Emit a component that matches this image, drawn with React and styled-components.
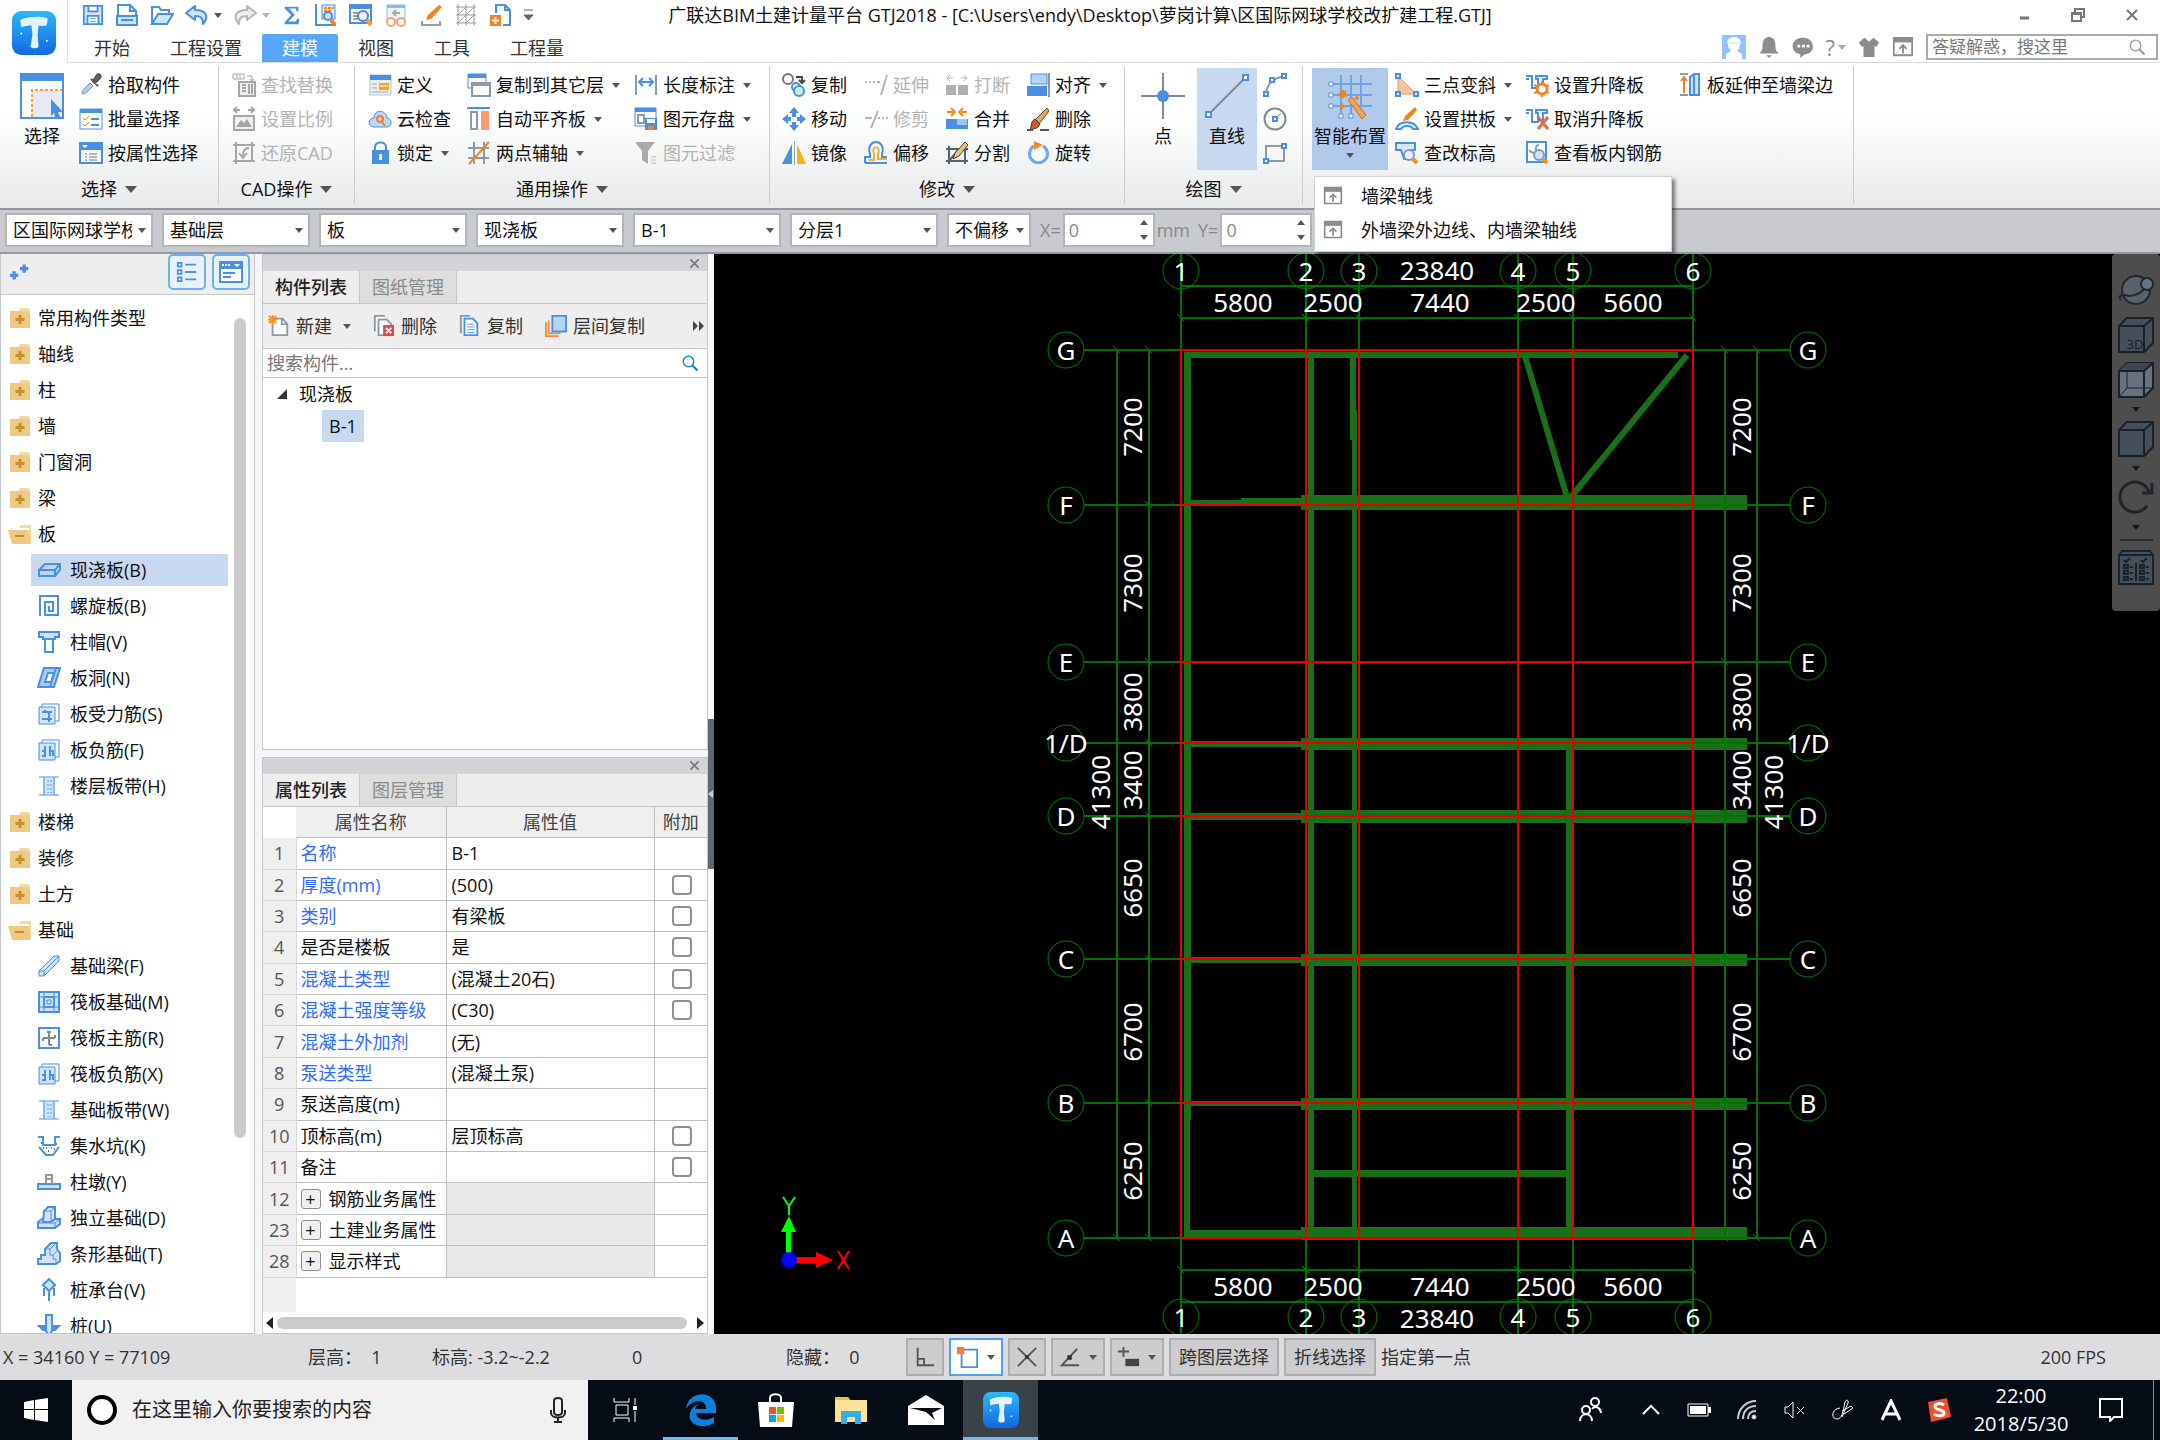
import React, { useState } from 'react'
import styled, { createGlobalStyle, css } from 'styled-components'

const GlobalStyle = createGlobalStyle`
  * {
    box-sizing: border-box;
  }
  body {
    margin: 0;
    overflow: hidden;
    background: #f4f5f6;
  }
  body, button, input, select, table {
    font-family: "Open Sans", "Noto Sans CJK SC", sans-serif;
    font-size: 18px;
    line-height: 24px;
    color: #111;
  }
  button {
    border: 0;
    padding: 0;
    background: none;
    white-space: nowrap;
  }
  ul {
    list-style: none;
    margin: 0;
    padding: 0;
  }
  svg {
    flex: none;
    display: block;
  }
`

/* ---------- icons ---------- */

const B = '#4a90e2'
const L = '#cfe3fa'
const G = '#a6a6a6'
const O = '#f5821f'

const rebar = (
  <>
    <path d="M2 5h16v17H2z" fill={L} stroke={B} />
    <path d="M5 5V2h17v17h-4" fill="none" stroke={B} />
  </>
)

const strip = (
  <>
    <path d="M6 4h12v16H6z" fill={L} />
    <path d="M2 3h20M2 21h20M7 3v18M17 3v18" stroke={B} fill="none" />
    <path d="M11 6v13M14 6v13" stroke={B} strokeDasharray="2 2" />
  </>
)

const liftSlab = <path d="M1 3h6v12h6v-9h-2V3h11v3h-4v9M1 6h3" fill="none" stroke={B} strokeWidth="2" />

const icons = {
  save: (
    <>
      <path d="M2 2h20v20H2z" fill={L} stroke={B} strokeWidth="2" />
      <path d="M7 2h10v6H7zM6 13h12v9H6z" fill="#fff" stroke={B} strokeWidth="2" />
      <path d="M9 16h6M9 19h6" stroke={B} />
    </>
  ),
  doc: (
    <>
      <path d="M3 2h12l6 6v14H3z" fill="#fff" stroke={B} strokeWidth="2" />
      <path d="M2 13h20v9H2z" fill={L} stroke={B} strokeWidth="2" />
      <path d="M15 2v6h6M6 17h12" fill="none" stroke={B} strokeWidth="2" />
    </>
  ),
  open: (
    <>
      <path d="M2 21V4h7l2 3h8v4" fill="#fff" stroke={B} strokeWidth="2" />
      <path d="M2 21l6-10h15l-6 10z" fill={L} stroke={B} strokeWidth="2" />
    </>
  ),
  undo: <path d="M10 3L1 10l9 7v-4c5 0 8 1 8 8 6-7 4-14-8-14z" fill={L} stroke={B} strokeWidth="2" strokeLinejoin="round" />,
  redo: <path d="M14 3l9 7-9 7v-4c-5 0-8 1-8 8-6-7-4-14 8-14z" fill="#eee" stroke="#b5b5b5" strokeWidth="2" strokeLinejoin="round" />,
  sum: <path d="M4 3h15v5h-2l-1-3H9l6 7-7 7h8l2-3h2l-1 6H4v-2l7-8-7-7z" fill={B} />,
  calcSearch: (
    <>
      <path d="M2 1v21h20" fill="none" stroke={B} strokeWidth="2" />
      <path d="M8 2h13v14H8z" fill="#e3edfa" stroke={B} />
      <path d="M10 5h3m1 0h3m1 0h2M10 8h3m1 0h3" stroke={O} strokeWidth="2" />
      <circle cx="14" cy="13" r="4" fill={L} stroke={B} strokeWidth="2" />
      <path d="M17 17l4 5" stroke={O} strokeWidth="4" />
    </>
  ),
  docSearch: (
    <>
      <path d="M1 2h21v18H1z" fill="#fff" stroke={B} strokeWidth="2" />
      <path d="M1 2h21v4H1z" fill={B} />
      <path d="M4 10h6M4 13h5M4 16h5" stroke={G} strokeWidth="2" />
      <circle cx="14" cy="13" r="5" fill="#e6effb" stroke="#5a82c4" strokeWidth="2" />
      <path d="M18 17l4 5" stroke="#f3a022" strokeWidth="4" />
    </>
  ),
  review: (
    <>
      <path d="M3 2h18v15H3z" fill="#eef5fd" stroke="#8abaf0" />
      <path d="M3 2h18v3H3z" fill="#8abaf0" />
      <path d="M16 10H9m3-3l-3 3 3 3" fill="none" stroke={G} strokeWidth="2" />
      <circle cx="7" cy="19" r="4" fill="#fff" stroke="#f7a56a" strokeWidth="2" />
      <circle cx="17" cy="19" r="4" fill="#fff" stroke="#f7a56a" strokeWidth="2" />
    </>
  ),
  brush: (
    <>
      <path d="M20 2l3 2L12 16l-5 1 2-5z" fill={O} />
      <path d="M3 18v4h18v-4" fill="none" stroke="#9a9a9a" strokeWidth="2" />
    </>
  ),
  mesh: <path d="M2 4h20M2 12h20M2 20h20M4 1v22M12 1v22M20 1v22M4 12l8-8M4 20L20 4M12 20l8-8" fill="none" stroke="#9d9d9d" />,
  addDoc: (
    <>
      <path d="M7 10V2h9l5 5v15h-7" fill="#fff" stroke={B} strokeWidth="2" />
      <path d="M16 2v5h5" fill="none" stroke={B} strokeWidth="2" />
      <path d="M1 12h11v11H1z" fill={O} />
      <path d="M6.500 14v7M3 17.500h7" stroke="#fff" strokeWidth="2" />
    </>
  ),
  dropper: (
    <>
      <path d="M3 21c0-4 2-5 8-11l3 3C8 19 7 21 3 21z" fill="#a9d0f7" stroke="#7d8894" />
      <path d="M12 6l7 7M14 8l4-6c2-2 5 1 3 3l-5 5z" stroke="#555" strokeWidth="2" fill="#666" />
    </>
  ),
  batch: (
    <>
      <path d="M1 2h22v20H1z" fill="#fff" stroke={B} strokeWidth="1" />
      <path d="M1 2h22v4H1z" fill={B} />
      <path d="M4 11l2 2 4-4M4 17l2 2 4-4" fill="none" stroke={O} />
      <path d="M12 12h8M12 18h8" stroke={B} strokeWidth="2" />
    </>
  ),
  attr: (
    <>
      <path d="M1 2h22v20H1z" fill="#f3f7fc" stroke={B} strokeWidth="2" />
      <path d="M1 2h22v7H1z" fill={B} />
      <path d="M3 4h6l-3 3z" fill="#fff" />
      <path d="M6 13h2m2 0h8M6 16h2m2 0h8M6 19h2m2 0h8" stroke="#777" />
    </>
  ),
  replace: (
    <>
      <path d="M1 1h11v5H1zM5 1v5M8 1v5M15 3h5v5m-2-2l2 3 2-3" fill="none" stroke={G} />
      <path d="M7 9h16v14H7z" fill="#eee" stroke={G} strokeWidth="2" />
      <path d="M10 12h4M10 15h4M10 18h4M17 11v10M20 11v10" stroke={G} strokeWidth="2" />
    </>
  ),
  ratio: (
    <>
      <path d="M8 3H2m3-3L2 3l3 3M16 3h6m-3-3l3 3-3 3" fill="none" stroke={G} strokeWidth="2" />
      <path d="M2 9h20v14H2z" fill="#f0f0f0" stroke={G} strokeWidth="2" />
      <path d="M4 20l5-7 3 3 3-4 5 8z" fill={G} />
    </>
  ),
  restore: (
    <>
      <path d="M1 4h22M4 1v22M20 1v19M1 20h22" fill="none" stroke={G} strokeWidth="2" />
      <path d="M17 7c-5 0-6 4-6 8m-4-3l4 5 4-5" fill="none" stroke={G} strokeWidth="2" />
    </>
  ),
  define: (
    <>
      <path d="M2 2h21v20H2z" fill="#e9edf3" stroke="#b7c3d4" />
      <path d="M2 2h21v5H2z" fill={B} />
      <path d="M4 11h5M4 15h5M4 19h16" stroke={G} />
      <path d="M11 10h10v7H11z" fill="#f6a623" />
      <path d="M12 13h8" stroke="#fff" />
    </>
  ),
  cloud: (
    <>
      <path d="M6 20c-7 0-6-9 0-9 0-9 12-9 13 0 6 1 5 9 0 9z" fill="#b9d7f8" stroke={B} />
      <circle cx="12" cy="12" r="3" fill="none" stroke={O} strokeWidth="2" />
      <path d="M14 15l3 4" stroke={O} strokeWidth="2" />
    </>
  ),
  lock: (
    <>
      <path d="M7 11V6c0-6 11-6 11 0v5" fill="none" stroke={B} strokeWidth="2" />
      <path d="M4 9h17v14H4z" fill={B} />
      <path d="M12.500 13v6" stroke="#fff" strokeWidth="3" />
    </>
  ),
  copyFloor: (
    <>
      <path d="M1 1h18v14H1z" fill="#fff" stroke={B} />
      <path d="M1 1h18v4H1z" fill={B} />
      <path d="M5 10h18v13H5z" fill="#fff" stroke="#8d99a6" strokeWidth="2" />
      <path d="M5 9h18v4H5z" fill="#8d99a6" />
    </>
  ),
  flat: (
    <>
      <path d="M0 1h23" stroke={B} strokeWidth="2" />
      <path d="M4 5h6v17H4z" fill="#fff" stroke="#8d99a6" strokeWidth="2" />
      <path d="M14 4h8v19h-8z" fill="#fb9a72" />
    </>
  ),
  axis: (
    <>
      <path d="M1 7h21M1 17h21M7 1v22M17 1v22" stroke="#8d99a6" strokeWidth="2" />
      <path d="M2 23L22 1" stroke={O} strokeWidth="2" />
    </>
  ),
  length: (
    <>
      <path d="M2 2v20M22 2v20" stroke="#8d99a6" strokeWidth="2" />
      <path d="M5 9h14M9 5L5 9l4 4M15 5l4 4-4 4" fill="none" stroke={B} strokeWidth="2" />
    </>
  ),
  store: (
    <>
      <path d="M1 1h21v18H1z" fill="#fff" stroke={B} />
      <path d="M1 1h21v4H1z" fill={B} />
      <path d="M4 8h6v8H4z" fill="none" stroke="#8d99a6" strokeWidth="2" />
      <path d="M11 11h12v12H11z" fill={B} />
      <path d="M13 12h8v4h-8z" fill="#fff" />
      <path d="M14 19h6v4h-6z" fill={O} />
    </>
  ),
  filter: (
    <>
      <path d="M1 1h20l-7 9v13l-6-4v-9z" fill="#aaa" />
      <path d="M17 16h5M17 19h5M17 22h5" stroke="#bbb" />
    </>
  ),
  copy: (
    <>
      <circle cx="6" cy="6" r="5" fill="#fff" stroke="#777" strokeWidth="2" />
      <path d="M14 4h6v6m-3-3l3 3 3-3" fill="none" stroke="#444" strokeWidth="2" />
      <circle cx="14" cy="14" r="4" fill="#fff" stroke={B} strokeWidth="2" />
      <circle cx="17" cy="18" r="5" fill="#cdeafa" stroke="#3d9bd9" strokeWidth="2" />
    </>
  ),
  move: <path d="M12 0l5 6h-3v4h-4V6H7zM12 24l5-6h-3v-3h-4v3H7zM0 12l6-5v3h3v4H6v3zM24 12l-6-5v3h-3v4h3v3z" fill={B} />,
  mirror: (
    <>
      <path d="M10 3v20H0z" fill={B} />
      <path d="M15 3v20h9z" fill="#fbb215" />
      <path d="M12.500 0v24" stroke="#8aa" />
    </>
  ),
  extend: <path d="M1 9h2m2 0h2m2 0h2m2 0h3M23 2l-6 20" stroke="#b4b4b4" strokeWidth="2" />,
  trim: <path d="M1 11h7M14 11h2m2 0h2m2 0h2M14 4L7 21" stroke="#b4b4b4" strokeWidth="2" />,
  offset: (
    <>
      <path d="M1 22v-6h5v-3C1-3 23-3 18 13v3h5M1 22h22" fill="none" stroke={B} strokeWidth="2" />
      <path d="M5 19h5v-6c-4-9 8-9 4 0v5h9" fill="none" stroke="#f3b03a" strokeWidth="2" />
    </>
  ),
  breakIt: (
    <>
      <path d="M8 5H2m3-3L2 5l3 3M16 5h6m-3-3l3 3-3 3" fill="none" stroke="#b0b0b0" />
      <path d="M1 12h10v10H1zM13 12h10v10H13z" fill="#b0b0b0" />
    </>
  ),
  merge: (
    <>
      <path d="M2 5h6M6 1l4 4-4 4M22 5h-6m2-4l-4 4 4 4" fill="none" stroke="#ee8d1e" strokeWidth="2" />
      <path d="M1 12h22v10H1z" fill={B} />
      <path d="M12 12h10v6H12z" fill="#9cc6f5" />
    </>
  ),
  split: (
    <>
      <path d="M1 8h22M1 20h22M4 5v18M20 5v18M4 20L14 8" fill="none" stroke="#54626f" strokeWidth="2" />
      <path d="M20 1l3 3-9 11-6 3 2-6z" fill="#e7c489" stroke="#54432a" />
    </>
  ),
  align: (
    <>
      <path d="M5 1h16v10H5z" fill="#b4d5fa" stroke={B} />
      <path d="M1 13h20v10H1z" fill={B} />
      <path d="M23 0v24" stroke="#8d99a6" strokeWidth="2" />
    </>
  ),
  erase: (
    <>
      <path d="M21 1l2 3L13 17l-4-4z" fill="#d9a866" stroke="#6b4d24" />
      <path d="M9 12l5 5c-2 5-5 4-10 6 2-4 0-8 5-11z" fill="#d3572b" stroke="#333" />
      <path d="M1 23h6M14 23h9" stroke="#555" strokeWidth="2" />
    </>
  ),
  rotate: (
    <>
      <path d="M8 5a9 9 0 1 0 9 0" fill="none" stroke="#69a9ee" strokeWidth="3" />
      <path d="M8 0l9 4-9 5z" fill="#f08c2e" />
    </>
  ),
  arc: (
    <>
      <path d="M3 21C4 11 9 6 21 3" fill="none" stroke="#8d99a6" strokeWidth="2" />
      <path d="M1 19h4v4H1zM7 5h4v4H7zM19 1h4v4h-4z" fill="#fff" stroke={B} strokeWidth="2" />
    </>
  ),
  circle: (
    <>
      <circle cx="12" cy="12" r="10.500" fill="none" stroke="#7f8b97" strokeWidth="2" />
      <path d="M12 12l6-6" stroke={B} />
      <path d="M10 10h4v4h-4z" fill="#fff" stroke={B} strokeWidth="2" />
    </>
  ),
  rect: (
    <>
      <path d="M3 5h18v15H3z" fill="none" stroke="#8d99a6" strokeWidth="2" />
      <path d="M1 18h4v4H1zM19 3h4v4h-4z" fill="#fff" stroke={B} strokeWidth="2" />
    </>
  ),
  slope: (
    <>
      <path d="M3 3v18h18z" fill="#fbc4a0" stroke="#e89a6a" />
      <path d="M1 1h4v4H1zM1 19h4v4H1zM19 19h4v4h-4z" fill="#fff" stroke={B} strokeWidth="2" />
    </>
  ),
  arch: (
    <>
      <path d="M20 0l2 3-9 10-5 1 2-5z" fill={O} />
      <path d="M1 22c3-9 18-9 22 0h-5c-2-4-10-4-12 0z" fill="#e4f0fd" stroke={B} strokeWidth="2" />
    </>
  ),
  level: (
    <>
      <path d="M1 2h19v7h-4l-3 9H9L6 9H1z" fill="#d6e7fb" stroke={B} strokeWidth="2" />
      <circle cx="14" cy="14" r="5" fill="#eef" stroke="#7c98c9" strokeWidth="2" />
      <path d="M18 18l4 4" stroke="#f5921f" strokeWidth="4" />
    </>
  ),
  lift: (
    <>
      {liftSlab}
      <circle cx="17" cy="16" r="5" fill="#fff" stroke={O} strokeWidth="3" />
      <path d="M17 8v3M17 21v3M9 12l3 1M22 19l2 1M9 20l3-1M22 13l2-1" stroke={O} strokeWidth="2" />
    </>
  ),
  unlift: (
    <>
      {liftSlab}
      <path d="M13 10l10 12M23 10L13 22" stroke="#ea6a48" strokeWidth="3" />
    </>
  ),
  inspect: (
    <>
      <path d="M2 1h19v20H2z" fill="#fff" stroke={B} strokeWidth="2" />
      <path d="M14 4c-4 0-3 3-3 12M5 9c0 4 9 3 9 0" fill="none" stroke="#8d99a6" strokeWidth="2" />
      <circle cx="14" cy="14" r="5" fill="#d6dffb" stroke="#7c98c9" strokeWidth="2" />
      <path d="M18 18l4 4" stroke="#f5921f" strokeWidth="4" />
    </>
  ),
  toEdge: (
    <>
      <path d="M2 1h8M2 22h8" stroke="#8d99a6" strokeWidth="2" />
      <path d="M6 20V5M3 8l3-4 3 4" fill="none" stroke={O} strokeWidth="2" />
      <path d="M12 4l4-3h5v21h-9zM16 1v21" fill={L} stroke={B} strokeWidth="2" />
    </>
  ),
  window: (
    <>
      <path d="M2 2h20v19H2z" fill="#fff" stroke="#8c8c8c" strokeWidth="2" />
      <path d="M2 2h20v5H2z" fill="#8c8c8c" />
      <path d="M12 19v-8m-4 3l4-4 4 4" fill="none" stroke="#8c8c8c" strokeWidth="2" />
    </>
  ),
  avatar: (
    <>
      <path d="M0 0h24v24H0z" fill="#8fc3fa" />
      <path d="M5 8c0-8 14-8 14 0l-1 1c0 4-2 6-3 7l5 3v5H4v-5l5-3C8 15 6 13 6 9z" fill="#fff" />
      <path d="M5 8h14" stroke="#c9e2fc" />
    </>
  ),
  bell: <path d="M12 1c5 0 7 4 7 9 0 5 1 7 3 8v1H2v-1c2-1 3-3 3-8 0-5 2-9 7-9zM9 21h6l-3 3z" fill="#8c8c8c" />,
  chat: (
    <>
      <path d="M12 2c14 0 14 18 2 18l-5 4v-4C-3 18-2 2 12 2z" fill="#8c8c8c" />
      <path d="M6 11h3m2 0h3m2 0h3" stroke="#fff" strokeWidth="3" />
    </>
  ),
  shirt: <path d="M7 2l5 4 5-4 6 5-3 5-2-1v12H6V11l-2 1-3-5z" fill="#8c8c8c" />,
  lens: (
    <>
      <circle cx="10" cy="10" r="7" fill="none" stroke="currentColor" strokeWidth="2" />
      <path d="M15 15l7 7" stroke="currentColor" strokeWidth="3" />
    </>
  ),
  folder: (
    <>
      <path d="M12 2h9l1 3H11z" fill="#f2d79f" />
      <path d="M2 5h20v17H2z" fill="#efc981" />
      <path d="M12 9v9M7.500 13.500h9" stroke="#c1902f" strokeWidth="3" />
    </>
  ),
  folderOpen: (
    <>
      <path d="M3 6h8l2-3h10v17H5z" fill="#f2d79f" />
      <path d="M4 6h17v2H4z" fill="#fff" />
      <path d="M0 8h20l3 14H4z" fill="#efc981" />
      <path d="M7 14h9" stroke="#c1902f" strokeWidth="2" />
    </>
  ),
  slab: <path d="M2 12l6-6h15v6l-5 6H2zM2 12h16l5-6M18 12v6" fill="#b5d4f7" stroke={B} strokeWidth="2" />,
  spiral: <path d="M3 22V2h18v19H8V8h8v9h-4v-5" fill="none" stroke={B} strokeWidth="2" />,
  cap: (
    <>
      <path d="M2 2h20v5h-4v2H6V7H2z" fill={L} stroke={B} strokeWidth="2" />
      <path d="M8 9h8v13H8z" fill="#fff" stroke={B} strokeWidth="2" />
    </>
  ),
  hole: (
    <>
      <path d="M7 2h16l-6 19H1z" fill="#a9cbf3" stroke={B} strokeWidth="2" />
      <path d="M11 7h6l-3 9H8zM19 2l-6 19" fill="#fff" stroke={B} strokeWidth="2" />
    </>
  ),
  barS: (
    <>
      {rebar}
      <path d="M5 10h10M5 17h10M8 10V8M12 10v10" fill="none" stroke={B} strokeWidth="2" />
    </>
  ),
  barF: (
    <>
      {rebar}
      <path d="M8 8v10H5M13 8v10M5 13h4M12 13h4v5" fill="none" stroke={B} strokeWidth="2" />
    </>
  ),
  strip,
  beam: <path d="M2 17L17 2h5v5L7 22H2zM2 17h5v5M7 17L22 2" fill={L} stroke={B} />,
  raft: (
    <>
      <path d="M2 2h20v20H2zM7 7h10v10H7z" fill={L} stroke={B} strokeWidth="2" />
      <path d="M2 7h20M2 17h20M7 2v20M17 2v20M10 10h4v4h-4z" fill="none" stroke={B} />
    </>
  ),
  raftBar: (
    <>
      <path d="M2 2h20v20H2z" fill="#fff" stroke={B} strokeWidth="2" />
      <path d="M12 6v13M6 12h12M10 6h4M6 12v3M18 12V9M12 19h3" fill="none" stroke="#7f8b97" strokeWidth="2" />
    </>
  ),
  pit: (
    <>
      <path d="M1 3h5v8h12V3h5" fill="none" stroke={B} strokeWidth="2" />
      <path d="M2 13l7 8h7l6-8" fill="none" stroke={B} strokeWidth="2" />
      <path d="M4 9h1M9 14h1M14 14h1M11 17h1M6 14h1M19 10h1M17 15h1" stroke="#777" strokeWidth="2" />
    </>
  ),
  pier: (
    <>
      <path d="M9 13V5h6v8M10 9h4" fill="none" stroke="#8d99a6" strokeWidth="2" />
      <path d="M1 14h22v5H1z" fill={L} stroke={B} strokeWidth="2" />
    </>
  ),
  footing: (
    <>
      <path d="M1 16l4-3h18v5l-5 4H1z" fill={L} stroke={B} strokeWidth="2" />
      <path d="M7 5l4-4h7v12l-4 3H6z" fill={L} stroke={B} strokeWidth="2" />
      <path d="M7 5h7v11M14 5l4-4M1 17h17l5-4M18 17v5" fill="none" stroke={B} />
    </>
  ),
  stripFoot: (
    <>
      <path d="M1 22v-5h3v-4h4V7l6-6h6v6l3 4v8l-4 3z" fill={L} stroke={B} strokeWidth="2" />
      <path d="M8 7h5v6h3v4h3v5M13 7l6-6M16 13l4-4" fill="none" stroke={B} />
    </>
  ),
  pileCap: (
    <>
      <path d="M12 1l6 6-6 6-6-6z" fill={L} stroke={B} strokeWidth="2" />
      <path d="M12 13v10M7 10v8M17 10v8" stroke={B} strokeWidth="2" />
    </>
  ),
  pile: (
    <>
      <path d="M2 12h20l-4 4H6z" fill={B} stroke={B} strokeWidth="2" />
      <path d="M9 1h6v16l-3 5-3-5z" fill={L} stroke={B} strokeWidth="2" />
    </>
  ),
  newDoc: (
    <>
      <path d="M5 4h11l5 6v12H5z" fill="#fff" stroke="#8d99a6" strokeWidth="2" />
      <path d="M15 4v6h6" fill="none" stroke="#8d99a6" strokeWidth="2" />
      <path d="M1 1l8 8M9 1L1 9M5 0v10M0 5h10" stroke="#f7941d" strokeWidth="2" />
    </>
  ),
  delDoc: (
    <>
      <path d="M2 18V1h11M6 5h9l5 5v12H6z" fill="#fff" stroke="#8d99a6" strokeWidth="2" />
      <path d="M11 11h12v12H11z" fill="#e04848" />
      <path d="M14 14l6 6M20 14l-6 6" stroke="#fff" strokeWidth="2" />
    </>
  ),
  copyDoc: (
    <>
      <path d="M2 20V1h10" fill="none" stroke="#8d99a6" strokeWidth="2" />
      <path d="M6 4h9l5 5v13H6z" fill="#fff" stroke={B} strokeWidth="2" />
      <path d="M9 10h7M9 13h8M9 16h8M9 19h8" stroke={B} />
    </>
  ),
  layerCopy: (
    <>
      <path d="M1 8v15h14M4 6v14h13" fill="none" stroke="#f0883e" strokeWidth="2" />
      <path d="M8 1h15v17H8z" fill="#b4d5fa" stroke={B} strokeWidth="2" />
    </>
  ),
  plus2: <path d="M5 11v10M0 16h10M17 3v10M12 8h10" stroke={B} strokeWidth="4" />,
  listView: (
    <>
      <path d="M2 2h4v4H2zM2 10h4v4H2zM2 18h4v4H2z" fill="#fff" stroke={B} strokeWidth="2" />
      <path d="M10 4h12M10 12h12M10 20h12" stroke={B} strokeWidth="2" />
    </>
  ),
  formView: (
    <>
      <path d="M1 2h22v20H1z" fill="#fff" stroke={B} strokeWidth="2" />
      <path d="M1 2h22v7H1z" fill={B} />
      <path d="M3 5h2m1 0h2m1 0h2" stroke="#fff" strokeWidth="2" />
      <path d="M15 4h6l-3 3z" fill="#fff" />
      <path d="M4 13h12M4 17h8" stroke={B} strokeWidth="2" />
    </>
  ),
  ortho: <path d="M4 2v19h18M4 14h7v7" fill="none" stroke="#555" strokeWidth="2" />,
  snapRect: (
    <>
      <path d="M5 4h17v19H5z" fill="#fff" stroke={B} strokeWidth="2" />
      <path d="M0 1h8v8H0z" fill="#f07f34" />
    </>
  ),
  cross: (
    <>
      <path d="M2 2l20 20M22 2L2 22" stroke="#555" strokeWidth="2" />
      <path d="M10 10h4v4h-4z" fill="#333" />
    </>
  ),
  angle: (
    <>
      <path d="M20 3L3 21h19" fill="none" stroke="#555" strokeWidth="2" />
      <path d="M9 10h5v5H9z" fill="#333" />
    </>
  ),
  coord: (
    <>
      <path d="M6 1v11M0 6h12" stroke="#555" strokeWidth="2" />
      <path d="M8 14h15v8H8z" fill="#444" />
    </>
  ),
}

const Icon = ({ name, size = 24 }) => (
  <svg width={size} height={size} viewBox="0 0 24 24" fill="none" aria-hidden="true">
    {icons[name]}
  </svg>
)

const Caret = styled.span`
  flex: none;
  border: ${(p) => (p.$big ? 6 : 4)}px solid transparent;
  border-top: ${(p) => (p.$big ? 7 : 5)}px solid ${(p) => p.$color || '#555'};
  border-bottom: 0;
`

/* ---------- frame ---------- */

const Screen = styled.div`
  display: flex;
  flex-direction: column;
  height: 100vh;
`

const Header = styled.header`
  display: flex;
  background: #fff;
`

const LogoButton = styled.button`
  display: flex;
  justify-content: center;
  align-items: center;
  width: 68px;
  height: 66px;
  border-right: 1px solid #e1e3e5;
  margin-bottom: -4px;
`

const HeaderRows = styled.div`
  flex: 1;
  border-bottom: 1px solid #d9dbdd;
`

const TitleRow = styled.div`
  display: flex;
  align-items: center;
  height: 34px;
  padding: 0 20px 4px 14px;
`

const QuickBar = styled.div`
  flex: 1 1 0;
  display: flex;
  align-items: center;
  gap: 11px;

  button {
    display: flex;
    align-items: center;
    gap: 5px;
  }
`

const AppTitle = styled.h1`
  margin: 0;
  font-size: 18px;
  font-weight: 400;
  white-space: nowrap;
`

/* the wider basis makes up for the logo, so the title is centred in the window */
const WindowButtons = styled.div`
  flex: 1 1 62px;
  display: flex;
  justify-content: flex-end;
  gap: 38px;
`

const TabRow = styled.div`
  display: flex;
  align-items: flex-end;
  justify-content: space-between;
  height: 28px;
  padding-left: 6px;
`

const Tabs = styled.nav`
  display: flex;
`

const Tab = styled.button`
  height: 28px;
  padding: 0 20px;
  color: ${(p) => (p.$active ? '#fff' : '#333')};
  background: ${(p) => (p.$active ? '#57a6f8' : 'none')};
  border-radius: 2px 2px 0 0;
`

const Account = styled.div`
  display: flex;
  align-items: center;
  gap: 12px;
  height: 28px;
  padding-bottom: 2px;
  color: #8c8c8c;

  button {
    display: flex;
    align-items: center;
    gap: 3px;
    font-size: 22px;
    color: #8c8c8c;
  }
`

const HelpSearch = styled.label`
  display: flex;
  align-items: center;
  width: 232px;
  height: 26px;
  margin-right: 2px;
  padding: 0 10px 0 4px;
  border: 2px solid #a9a9a9;
  color: #a0a0a0;

  input {
    flex: 1;
    min-width: 0;
    height: 22px;
    padding: 0;
    border: 0;
    outline: 0;
    background: none;
    font-size: 17px;
  }
  input::placeholder {
    color: #777;
  }
`

/* ---------- ribbon ---------- */

const Ribbon = styled.div`
  display: flex;
  height: 147px;
  padding: 3px 0 4px;
  border-bottom: 2px solid #90959b;
  background: linear-gradient(#fff 35%, #e7eaeb);
`

const GroupBox = styled.section`
  display: flex;
  flex-direction: column;
  justify-content: space-between;
  flex: none;
  width: ${(p) => p.$width}px;
  padding: 2px 0 0 ${(p) => p.$pad}px;
  border-right: 1px solid #cbcecf;
`

const GroupTools = styled.div`
  display: grid;
  grid-template-columns: ${(p) => p.$cols};
  align-items: start;
`

const GroupCaption = styled.button`
  display: flex;
  align-items: center;
  justify-content: center;
  gap: 8px;
  height: 30px;
  margin-left: -${(p) => p.$pad}px;
`

const Column = styled.div`
  display: flex;
  flex-direction: column;
  align-items: flex-start;
`

const ToolButton = styled.button`
  display: flex;
  align-items: center;
  gap: 5px;
  height: 34px;
  color: ${(p) => (p.disabled ? '#b3b3b3' : '#111')};

  ${Caret} {
    margin-left: 3px;
  }
`

const BigButton = styled.button`
  display: flex;
  flex-direction: column;
  align-items: center;
  gap: 5px;
  width: ${(p) => p.$width}px;
  height: 102px;
  padding-top: 5px;
  background: ${(p) => p.$fill || 'none'};
`

const MenuAnchor = styled.div`
  position: relative;
`

const Menu = styled.ul`
  position: absolute;
  top: 108px;
  left: 2px;
  z-index: 5;
  width: 358px;
  padding: 2px 0 4px;
  background: #fff;
  border: 1px solid #d5d5d5;
  box-shadow: 3px 3px 4px rgba(0, 0, 0, 0.5);

  button {
    display: flex;
    align-items: center;
    gap: 18px;
    width: 100%;
    height: 34px;
    padding-left: 8px;
  }
`

function Group({ title, width, pad, cols, children }) {
  return (
    <GroupBox $width={width} $pad={pad}>
      <GroupTools $cols={cols}>{children}</GroupTools>
      {title && (
        <GroupCaption $pad={pad}>
          {title}
          <Caret $big />
        </GroupCaption>
      )}
    </GroupBox>
  )
}

// item: [icon, label, hasMenu, disabled]
const Tools = ({ items }) => (
  <Column>
    {items.map(([icon, label, menu, disabled]) => (
      <ToolButton key={icon} disabled={disabled}>
        <Icon name={icon} />
        {label}
        {menu && <Caret />}
      </ToolButton>
    ))}
  </Column>
)

/* ---------- option bar ---------- */

const OptionBar = styled.div`
  display: flex;
  align-items: center;
  height: 44px;
  padding: 0 5px 2px;
  gap: 9px;
  background: #c8cacf;
  border-bottom: 2px solid #949aa1;
  color: #8a8a8a;
`

const SelectBox = styled.div`
  position: relative;
  width: ${(p) => p.$width}px;

  select {
    width: 100%;
    height: 34px;
    padding: 0 19px 0 6px;
    border: 2px solid #b3b5b9;
    border-radius: 0;
    background: #fff;
    appearance: none;
  }
  ${Caret} {
    position: absolute;
    top: 15px;
    right: 7px;
    pointer-events: none;
  }
`

const Offsets = styled.div`
  display: flex;
  align-items: center;
  gap: 8px;
`

const OffsetLabel = styled.label`
  display: flex;
  align-items: center;
  gap: 2px;
`

const NumberBox = styled.span`
  position: relative;
  width: 92px;

  input {
    display: block;
    width: 100%;
    height: 34px;
    padding: 0 4px;
    border: 2px solid #b3b5b9;
    background: #fff;
    color: #8a8a8a;
    appearance: textfield;
  }
  svg {
    position: absolute;
    top: 7px;
    right: 6px;
  }
`

const NumberField = ({ label, unit }) => (
  <OffsetLabel>
    {label}
    <NumberBox>
      <input type="number" defaultValue="0" />
      <svg width="10" height="20" viewBox="0 0 10 20">
        <path d="M1 5l4-5 4 5zM1 15l4 5 4-5z" fill="#555" />
      </svg>
    </NumberBox>
    {unit}
  </OffsetLabel>
)

/* ---------- left tree ---------- */

const Work = styled.main`
  flex: 1;
  min-height: 0;
  display: flex;
`

const Side = styled.aside`
  display: flex;
  flex-direction: column;
  width: 255px;
  margin-right: 7px;
  border: 1px solid #c4c8cc;
  border-width: 0 1px 1px;
  background: #fff;
`

const SideTop = styled.div`
  display: flex;
  align-items: center;
  gap: 6px;
  height: 41px;
  padding: 0 4px 4px 9px;
  background: #eee;
  border-bottom: 1px solid #c4c8cc;

  > svg {
    margin-right: auto;
  }
`

const ViewButton = styled.button`
  display: flex;
  align-items: center;
  justify-content: center;
  width: 38px;
  height: 36px;
  border: 2px solid #6db0f5;
  border-radius: 5px;
  background: #e8f2fd;
`

const SideBody = styled.div`
  flex: 1;
  min-height: 0;
  display: flex;
`

const Tree = styled.ul`
  flex: 1;
  padding-top: 5px;
  overflow: hidden;
`

const TreeFolder = styled.button`
  display: flex;
  align-items: center;
  gap: 6px;
  height: 36px;
  padding-left: 7px;
`

const LeafRow = styled.li`
  display: flex;
  align-items: center;
  height: 36px;
  padding-left: 30px;
`

const TreeLeaf = styled.button`
  display: flex;
  align-items: center;
  gap: 9px;
  width: 197px;
  height: 32px;
  padding-left: 6px;
  background: ${(p) => (p.$active ? '#c8d8ef' : 'none')};
`

const Thumb = styled.div`
  width: 12px;
  height: 79%;
  margin: 23px 8px 0 4px;
  border-radius: 6px;
  background: #cbcbcb;
`

/* ---------- docked panels ---------- */

const Docks = styled.div`
  display: flex;
  flex-direction: column;
  gap: 7px;
  width: 446px;
`

const Dock = styled.section`
  display: flex;
  flex-direction: column;
  flex: ${(p) => p.$grow};
  min-height: 0;
  border: 1px solid #c4c8cc;
  background: #fff;
`

const DockBar = styled.div`
  display: flex;
  justify-content: flex-end;
  align-items: center;
  height: 16px;
  padding-right: 6px;
  background: #d2d4d8;
`

const DockTabs = styled.div`
  display: flex;
  height: 33px;
  background: #eee;
  border-bottom: 1px solid #c4c8cc;
`

const DockTab = styled.button`
  width: 97px;
  border-right: 1px solid #c4c8cc;
  font-weight: ${(p) => (p.$active ? 500 : 400)};
  color: ${(p) => (p.$active ? '#222' : '#8a8a8a')};
  background: ${(p) => (p.$active ? '#eee' : '#dedede')};
`

const DockTools = styled.div`
  display: flex;
  align-items: center;
  gap: 22px;
  height: 45px;
  padding: 0 2px 0 5px;
  background: #eee;
  border-bottom: 1px solid #c4c8cc;

  button {
    display: flex;
    align-items: center;
    gap: 6px;
    color: #333;
  }
  button:last-child {
    margin-left: auto;
  }
  ${Caret} {
    margin-left: 5px;
  }
`

const PartSearch = styled.label`
  display: flex;
  align-items: center;
  height: 29px;
  padding: 0 8px 0 4px;
  border-bottom: 1px solid #c4c8cc;
  color: #2487c9;

  input {
    flex: 1;
    padding: 0;
    border: 0;
    outline: 0;
  }
  input::placeholder {
    color: #777;
  }
`

const PartTree = styled.div`
  display: flex;
  flex-direction: column;
  align-items: flex-start;
  padding: 0 14px;

  > button {
    display: flex;
    align-items: center;
    gap: 11px;
    height: 32px;
  }
`

const Part = styled.button`
  && {
    margin-left: 45px;
    padding: 0 7px;
    background: #c8d8ef;
  }
`

const PropTable = styled.table`
  width: 100%;
  height: 471px;
  border-collapse: collapse;
  table-layout: fixed;

  th {
    font-weight: 400;
    color: #444;
    background: #efefef;
  }
  th, td {
    height: 31px;
    padding: 0;
    border-right: 1px solid #bcc0c5;
    border-bottom: 1px solid #bcc0c5;
    white-space: nowrap;
    overflow: hidden;
  }
  th:first-child {
    background: #fff;
    border: 0;
  }
  tr > :last-child {
    border-right: 0;
  }
  td:first-child {
    text-align: center;
    color: #555;
    background: #efefef;
    border-color: #d9d9d9;
  }
`

const NameCell = styled.td`
  && {
    padding-left: 4px;
  }
  color: ${(p) => (p.$link ? '#2f6bff' : '#111')};

  span {
    display: flex;
    align-items: center;
    gap: 8px;
  }
`

const Expand = styled.button`
  width: 20px;
  height: 20px;
  border: 1px solid #8c8c8c;
  border-radius: 3px;
  background: #f0f0f0;
  line-height: 16px;
`

const ValueCell = styled.td`
  && {
    padding-left: 5px;
  }
  ${(p) => p.$blank && css`background: #e9e9e9;`}
`

const CheckCell = styled.td`
  input {
    display: block;
    width: 20px;
    height: 20px;
    margin: 0 0 0 17px;
    border: 2px solid #8f8f8f;
    border-radius: 4px;
    background: #fff;
    appearance: none;
  }
`

const TableRest = styled.div`
  flex: 1;
  background: linear-gradient(90deg, #efefef 33px, #fff 33px);
`

const HScroll = styled.div`
  display: flex;
  align-items: center;
  gap: 4px;
  height: 21px;
  padding: 0 3px;

  div {
    flex: 1;
    height: 12px;
    margin-right: 6px;
    border-radius: 6px;
    background: #cbcbcb;
  }
`

const Collapser = styled.div`
  display: flex;
  flex-direction: column;
  justify-content: center;
  width: 6px;
  background: #f8f8f8;

  button {
    display: flex;
    align-items: center;
    height: 150px;
    background: #5d6873;
  }
`

/* ---------- drawing area ---------- */

const Canvas = styled.div`
  position: relative;
  flex: 1;
  min-width: 0;
  background: #000;

  > svg {
    width: 100%;
    height: 100%;
  }
  text {
    font-family: "Noto Sans", sans-serif;
    font-size: 26px;
    fill: #fff;
    text-anchor: middle;
    dominant-baseline: central;
  }
`

const ViewBar = styled.div`
  position: absolute;
  top: 0;
  right: 0;
  display: flex;
  flex-direction: column;
  align-items: center;
  width: 48px;
  height: 357px;
  padding-top: 18px;
  border-radius: 4px;
  background: #4d4d4d;

  button {
    display: flex;
    flex-direction: column;
    align-items: center;
    gap: 9px;
    margin-bottom: 9px;
  }
  hr {
    width: 33px;
    margin: 0 0 8px;
    border: 0;
    border-top: 2px solid #2b2d30;
  }
  text {
    font-size: 13px;
    fill: #1c2127;
  }
`

const colAxes = [
  ['1', 1181],
  ['2', 1306],
  ['3', 1359],
  ['4', 1518],
  ['5', 1573],
  ['6', 1693],
]

const rowAxes = [
  ['G', 350],
  ['F', 505],
  ['E', 662],
  ['1/D', 743],
  ['D', 816],
  ['C', 959],
  ['B', 1103],
  ['A', 1238],
]

const colDims = [
  ['5800', 1243],
  ['2500', 1333],
  ['7440', 1440],
  ['2500', 1546],
  ['5600', 1633],
]

const rowDims = [
  ['7200', 427],
  ['7300', 583],
  ['3800', 702],
  ['3400', 780],
  ['6650', 888],
  ['6700', 1032],
  ['6250', 1171],
]

// x, y, width, height
const beams = [
  [1184, 352, 494, 6],
  [1184, 352, 7, 768],
  [1184, 1120, 6, 118],
  [1308, 358, 6, 872],
  [1350, 358, 6, 82],
  [1352, 410, 5, 820],
  [1301, 495, 446, 15],
  [1191, 500, 110, 5],
  [1241, 498, 60, 4],
  [1301, 738, 446, 12],
  [1191, 741, 110, 6],
  [1301, 810, 446, 13],
  [1191, 813, 110, 7],
  [1301, 954, 446, 12],
  [1191, 957, 110, 6],
  [1301, 1098, 446, 12],
  [1191, 1101, 110, 5],
  [1301, 1227, 446, 13],
  [1184, 1230, 117, 8],
  [1313, 1170, 253, 7],
  [1566, 749, 6, 480],
]

const Tick = ({ x, y }) => <path d={`M${x - 4} ${y - 4}l7 7`} />

const Bubble = ({ x, y, label }) => (
  <>
    <circle cx={x} cy={y} r="18" fill="none" stroke="#008000" />
    <text x={x} y={y}>{label}</text>
  </>
)

const VText = ({ x, y, children }) => (
  <text transform={`translate(${x} ${y}) rotate(-90)`}>{children}</text>
)

const Plan = () => (
  <svg viewBox="714 254 1446 1080" role="img" aria-label="轴网平面图">
    <g fill="#197019" shapeRendering="crispEdges">
      {beams.map(([x, y, w, h]) => (
        <rect key={`${x}-${y}-${w}`} x={x} y={y} width={w} height={h} />
      ))}
    </g>
    <path d="M1525 356L1567 497L1571 497L1687 355" fill="none" stroke="#197019" strokeWidth="6" />
    <g stroke="#007200" strokeWidth="2" fill="none">
      <g shapeRendering="crispEdges">
        {colAxes.map(([n, x]) => (
          <path key={n} d={`M${x} 254V350M${x} 1238V1334`} />
        ))}
        {rowAxes.map(([n, y]) => (
          <path key={n} d={`M1084 ${y}H1181M1693 ${y}H1790`} />
        ))}
        <path d="M1181 286H1693M1181 318H1693M1181 1270H1693M1181 1302H1693" />
        <path d="M1117 350V1238M1149 350V1238M1725 350V1238M1757 350V1238" />
      </g>
    </g>
    <g stroke="#008000" fill="none">
      {colAxes.map(([n, x]) => (
        <g key={n}>
          <Tick x={x} y={318} />
          <Tick x={x} y={1270} />
        </g>
      ))}
      {rowAxes.map(([n, y]) => (
        <g key={n}>
          <Tick x={1149} y={y} />
          <Tick x={1725} y={y} />
        </g>
      ))}
      <Tick x={1117} y={350} />
      <Tick x={1117} y={1238} />
      <Tick x={1757} y={350} />
      <Tick x={1757} y={1238} />
    </g>
    <g stroke="#e80000" strokeWidth="2" shapeRendering="crispEdges">
      {colAxes.map(([n, x]) => (
        <path key={n} d={`M${x} 350V1238`} />
      ))}
      {rowAxes.map(([n, y]) => (
        <path key={n} d={`M1181 ${y}H1693`} />
      ))}
    </g>
    {colAxes.map(([n, x]) => (
      <g key={n}>
        <Bubble x={x} y={271} label={n} />
        <Bubble x={x} y={1317} label={n} />
      </g>
    ))}
    {rowAxes.map(([n, y]) => (
      <g key={n}>
        <Bubble x={1066} y={y} label={n} />
        <Bubble x={1808} y={y} label={n} />
      </g>
    ))}
    {colDims.map(([t, x]) => (
      <g key={x}>
        <text x={x} y={302}>{t}</text>
        <text x={x} y={1286}>{t}</text>
      </g>
    ))}
    {rowDims.map(([t, y]) => (
      <g key={y}>
        <VText x={1132} y={y}>{t}</VText>
        <VText x={1741} y={y}>{t}</VText>
      </g>
    ))}
    <text x="1437" y="270">23840</text>
    <text x="1437" y="1318">23840</text>
    <VText x={1100} y={792}>41300</VText>
    <VText x={1773} y={792}>41300</VText>
    <path d="M786 1257v-25h-5l8-16 7 16h-5v25z" fill="#0f0" />
    <path d="M790 1257h26v-5l17 8-17 8v-5h-26z" fill="#f00" />
    <circle cx="789" cy="1260" r="8" fill="#00f" />
    <path d="M783 1197l6 9 6-9M789 1206v9" fill="none" stroke="#0f0" strokeWidth="2" />
    <path d="M838 1251l11 18M849 1251l-11 18" stroke="#f00" strokeWidth="2" />
  </svg>
)

const Cube = ({ open, children }) => (
  <svg width="36" height="36" viewBox="0 0 36 36">
    <path d="M1 9l8-8h26v25l-9 9H1z" fill={open ? '#66727f' : '#454f5b'} stroke="#1c2127" strokeWidth="2" />
    {open && <path d="M1 9l8-8h26l-9 8z" fill="#3d4650" />}
    <path d="M1 9h25v26M26 9l9-8" fill="none" stroke="#1c2127" strokeWidth="2" />
    {open && <path d="M9 9v17h26M9 26l-8 9" fill="none" stroke="#1c2127" />}
    {children}
  </svg>
)

const ViewTools = () => (
  <ViewBar>
    <button aria-label="动态观察">
      <svg width="36" height="36" viewBox="0 0 36 36">
        <circle cx="18" cy="18" r="14" fill="#59616b" stroke="#22272d" strokeWidth="2" />
        <path d="M3 28c-5-5 3-6 8-4 9 0 15-6 18-11" fill="none" stroke="#22272d" strokeWidth="2" />
        <circle cx="29" cy="12" r="6" fill="#6b747e" stroke="#22272d" strokeWidth="2" />
      </svg>
    </button>
    <button aria-label="三维">
      <Cube><text x="17" y="27">3D</text></Cube>
    </button>
    <button aria-label="线框">
      <Cube open />
      <Caret $color="#16191d" />
    </button>
    <button aria-label="实体">
      <Cube />
      <Caret $color="#16191d" />
    </button>
    <button aria-label="旋转视图">
      <svg width="36" height="36" viewBox="0 0 36 36">
        <path d="M29 26A15 15 0 1 1 31 12M34 3v10H24" fill="none" stroke="#20252b" strokeWidth="3" />
      </svg>
      <Caret $color="#16191d" />
    </button>
    <hr />
    <button aria-label="显示设置">
      <svg width="36" height="36" viewBox="0 0 36 36">
        <path d="M1 6l3-4h28l3 4v29H1zM1 6h34" fill="#454f5b" stroke="#1c2127" strokeWidth="2" />
        <path
          d="M18 14v18M6 11l2 2 4-4M23 11l2 2 4-4M6 16h4v3H6zM6 22h4v3H6zM6 28h4v3H6zM22 16h4v3h-4zM22 22h4v3h-4zM22 28h4v3h-4zM12 18h3M12 24h3M12 30h3M28 18h3M28 24h3M28 30h3"
          fill="none"
          stroke="#1c2127"
          strokeWidth="2"
        />
      </svg>
    </button>
  </ViewBar>
)

/* ---------- status bar ---------- */

const StatusBar = styled.footer`
  display: flex;
  align-items: center;
  gap: 5px;
  height: 46px;
  padding: 0 54px 0 3px;
  background: #dddde0;
  color: #333;
  white-space: pre;
`

const Status = styled.span`
  width: ${(p) => p.$width}px;
`

const StatusButton = styled.button`
  display: flex;
  align-items: center;
  justify-content: center;
  gap: 8px;
  height: 38px;
  padding: 0 ${(p) => (p.$wide ? 8 : 6)}px;
  color: #333;
  border: 2px solid ${(p) => (p.$active ? '#4aa3f5' : '#aeaeb0')};
  background: ${(p) => (p.$active ? '#fff' : '#cdcdcf')};
`

const Fps = styled.span`
  margin-left: auto;
`

/* ---------- taskbar ---------- */

const Taskbar = styled.div`
  display: flex;
  align-items: stretch;
  height: 60px;
  background: #060c15;
  color: #fff;
`

const StartButton = styled.button`
  display: flex;
  align-items: center;
  justify-content: center;
  width: 72px;
`

const TaskSearch = styled.label`
  display: flex;
  align-items: center;
  gap: 14px;
  width: 516px;
  padding: 0 20px 0 14px;
  background: #f1f1f1;

  input {
    flex: 1;
    padding: 0;
    border: 0;
    outline: 0;
    background: none;
    font-size: 20px;
  }
  input::placeholder {
    color: #222;
    opacity: 1;
  }
`

const TaskButton = styled.button`
  display: flex;
  align-items: center;
  justify-content: center;
  width: 75px;
  ${(p) => p.$open && css`box-shadow: inset 0 -3px #76b9ed;`}
  ${(p) => p.$front && css`background: #3b4149;`}
`

const Tray = styled.div`
  display: flex;
  align-items: center;
  margin-left: auto;

  button {
    display: flex;
    align-items: center;
    justify-content: center;
    width: 48px;
    height: 60px;
    color: #fff;
  }
  button:first-child {
    margin-right: 12px;
  }
`

const Clock = styled.time`
  width: 106px;
  padding-left: 10px;
  font-size: 20px;
  line-height: 28px;
  text-align: center;
`

const ActionCenter = styled.button`
  && {
    width: 84px;
  }
`

const ShowDesktop = styled.button`
  && {
    width: 7px;
    border-left: 1px solid #8a8d91;
  }
`

const Hammer = ({ size }) => (
  <svg width={size} height={size} viewBox="0 0 43 43">
    <defs>
      <linearGradient id="hammerFill" x1="0" y1="0" x2="0" y2="1">
        <stop offset="0" stopColor="#2cb8fb" />
        <stop offset="1" stopColor="#1268e0" />
      </linearGradient>
    </defs>
    <rect width="43" height="43" rx="9" fill="url(#hammerFill)" />
    <path d="M8 9c8-4 19-4 27-2l-1 7c-3 1-6 1-8 0l-1 9 1 12c-2 2-6 2-8 0l2-12-1-9c-4 0-7 1-10 2z" fill="#e4f4ff" />
    <circle cx="34" cy="29" r="1" fill="#fff" />
    <circle cx="9" cy="22" r="1" fill="#fff" />
  </svg>
)

const Close = ({ size = 16, color = '#777' }) => (
  <svg width={size} height={size} viewBox="0 0 16 16">
    <path d="M3 3l10 10M13 3L3 13" stroke={color} strokeWidth="2" />
  </svg>
)

/* ---------- data ---------- */

const ribbonTabs = ['开始', '工程设置', '建模', '视图', '工具', '工程量']

const tree = [
  { name: '常用构件类型' },
  { name: '轴线' },
  { name: '柱' },
  { name: '墙' },
  { name: '门窗洞' },
  { name: '梁' },
  {
    name: '板',
    items: [
      ['slab', '现浇板(B)'],
      ['spiral', '螺旋板(B)'],
      ['cap', '柱帽(V)'],
      ['hole', '板洞(N)'],
      ['barS', '板受力筋(S)'],
      ['barF', '板负筋(F)'],
      ['strip', '楼层板带(H)'],
    ],
  },
  { name: '楼梯' },
  { name: '装修' },
  { name: '土方' },
  {
    name: '基础',
    items: [
      ['beam', '基础梁(F)'],
      ['raft', '筏板基础(M)'],
      ['raftBar', '筏板主筋(R)'],
      ['barF', '筏板负筋(X)'],
      ['strip', '基础板带(W)'],
      ['pit', '集水坑(K)'],
      ['pier', '柱墩(Y)'],
      ['footing', '独立基础(D)'],
      ['stripFoot', '条形基础(T)'],
      ['pileCap', '桩承台(V)'],
      ['pile', '桩(U)'],
    ],
  },
]

const props = [
  { no: 1, name: '名称', value: 'B-1', link: true },
  { no: 2, name: '厚度(mm)', value: '(500)', link: true, check: true },
  { no: 3, name: '类别', value: '有梁板', link: true, check: true },
  { no: 4, name: '是否是楼板', value: '是', check: true },
  { no: 5, name: '混凝土类型', value: '(混凝土20石)', link: true, check: true },
  { no: 6, name: '混凝土强度等级', value: '(C30)', link: true, check: true },
  { no: 7, name: '混凝土外加剂', value: '(无)', link: true },
  { no: 8, name: '泵送类型', value: '(混凝土泵)', link: true },
  { no: 9, name: '泵送高度(m)', value: '' },
  { no: 10, name: '顶标高(m)', value: '层顶标高', check: true },
  { no: 11, name: '备注', value: '', check: true },
  { no: 12, name: '钢筋业务属性', group: true },
  { no: 23, name: '土建业务属性', group: true },
  { no: 28, name: '显示样式', group: true },
]

const options = [
  ['工程', '区国际网球学校改扩建工程', 148],
  ['楼层', '基础层', 148],
  ['构件类型', '板', 148],
  ['构件', '现浇板', 148],
  ['构件名称', 'B-1', 148],
  ['分层', '分层1', 148],
  ['偏移', '不偏移', 84],
]

/* ---------- sections ---------- */

function TopBar({ tab, onTab }) {
  return (
    <Header>
      <LogoButton aria-label="菜单"><Hammer size={44} /></LogoButton>
      <HeaderRows>
        <TitleRow>
          <QuickBar>
            <button aria-label="保存"><Icon name="save" size={22} /></button>
            <button aria-label="新建"><Icon name="doc" /></button>
            <button aria-label="打开"><Icon name="open" /></button>
            <button aria-label="撤销"><Icon name="undo" /><Caret /></button>
            <button aria-label="恢复"><Icon name="redo" /><Caret $color="#b5b5b5" /></button>
            <button aria-label="汇总计算"><Icon name="sum" size={22} /></button>
            <button aria-label="查看计算式"><Icon name="calcSearch" /></button>
            <button aria-label="查看工程量"><Icon name="docSearch" /></button>
            <button aria-label="查看报表"><Icon name="review" /></button>
            <button aria-label="格式刷"><Icon name="brush" /></button>
            <button aria-label="网格"><Icon name="mesh" /></button>
            <button aria-label="添加图纸"><Icon name="addDoc" /></button>
            <button aria-label="自定义">
              <svg width="9" height="12" viewBox="0 0 9 12">
                <path d="M0 1h9M0 6h9l-4.500 5z" stroke="#666" fill="#666" />
              </svg>
            </button>
          </QuickBar>
          <AppTitle>广联达BIM土建计量平台 GTJ2018 - [C:\Users\endy\Desktop\萝岗计算\区国际网球学校改扩建工程.GTJ]</AppTitle>
          <WindowButtons>
            <button aria-label="最小化">
              <svg width="16" height="16" viewBox="0 0 16 16"><path d="M4 11h9" stroke="#777" strokeWidth="3" /></svg>
            </button>
            <button aria-label="还原">
              <svg width="16" height="16" viewBox="0 0 16 16">
                <path d="M5 6V2h9v8h-3M2 6h9v8H2zM2 7h9" fill="none" stroke="#777" strokeWidth="2" />
              </svg>
            </button>
            <button aria-label="关闭"><Close /></button>
          </WindowButtons>
        </TitleRow>
        <TabRow>
          <Tabs>
            {ribbonTabs.map((t) => (
              <Tab key={t} $active={t === tab} onClick={() => onTab(t)}>{t}</Tab>
            ))}
          </Tabs>
          <Account>
            <button aria-label="用户"><Icon name="avatar" /></button>
            <button aria-label="通知"><Icon name="bell" size={22} /></button>
            <button aria-label="消息"><Icon name="chat" size={22} /></button>
            <button aria-label="帮助">?<Caret $color="#aaa" /></button>
            <button aria-label="皮肤"><Icon name="shirt" size={22} /></button>
            <button aria-label="收起"><Icon name="window" size={22} /></button>
            <HelpSearch>
              <input placeholder="答疑解惑，搜这里" aria-label="答疑解惑" />
              <Icon name="lens" size={18} />
            </HelpSearch>
          </Account>
        </TabRow>
      </HeaderRows>
    </Header>
  )
}

function RibbonBar() {
  return (
    <Ribbon>
      <Group title="选择" width={219} pad={12} cols="67px auto">
        <BigButton $width={60}>
          <svg width="44" height="46" viewBox="0 0 44 46">
            <path d="M1 1h42v44H1z" fill="#fff" stroke={B} strokeWidth="2" />
            <path d="M0 0h44v8H0z" fill={B} />
            <path d="M12 17h30v27H12z" fill="#e6ebf5" />
            <path d="M12 44V17h30" fill="none" stroke="#f5a623" strokeWidth="2" strokeDasharray="3 2" />
            <path d="M31 26l12 13h-5l2 5h-5l-1-4-3 3z" fill={B} />
          </svg>
          选择
        </BigButton>
        <Tools items={[['dropper', '拾取构件'], ['batch', '批量选择'], ['attr', '按属性选择']]} />
      </Group>
      <Group title="CAD操作" width={136} pad={13} cols="auto">
        <Tools
          items={[
            ['replace', '查找替换', false, true],
            ['ratio', '设置比例', false, true],
            ['restore', '还原CAD', false, true],
          ]}
        />
      </Group>
      <Group title="通用操作" width={415} pad={13} cols="99px 167px auto">
        <Tools items={[['define', '定义'], ['cloud', '云检查'], ['lock', '锁定', true]]} />
        <Tools items={[['copyFloor', '复制到其它层', true], ['flat', '自动平齐板', true], ['axis', '两点辅轴', true]]} />
        <Tools items={[['length', '长度标注', true], ['store', '图元存盘', true], ['filter', '图元过滤', false, true]]} />
      </Group>
      <Group title="修改" width={355} pad={12} cols="82px 81px 81px auto">
        <Tools items={[['copy', '复制'], ['move', '移动'], ['mirror', '镜像']]} />
        <Tools items={[['extend', '延伸', false, true], ['trim', '修剪', false, true], ['offset', '偏移']]} />
        <Tools items={[['breakIt', '打断', false, true], ['merge', '合并'], ['split', '分割']]} />
        <Tools items={[['align', '对齐', true], ['erase', '删除'], ['rotate', '旋转']]} />
      </Group>
      <Group title="绘图" width={178} pad={8} cols="64px 66px auto">
        <BigButton $width={60}>
          <svg width="44" height="46" viewBox="0 0 44 46">
            <path d="M22 0v46M0 23h44" stroke="#7f8b97" strokeWidth="2" />
            <circle cx="22" cy="23" r="6" fill={B} />
          </svg>
          点
        </BigButton>
        <BigButton $width={60} $fill="#c8d8ef">
          <svg width="44" height="46" viewBox="0 0 44 46">
            <path d="M3 42L41 4" stroke="#7f8b97" strokeWidth="2" />
            <path d="M1 39h5v5H1zM38 2h5v5h-5z" fill="#fff" stroke={B} strokeWidth="2" />
          </svg>
          直线
        </BigButton>
        <Column>
          {[['arc', '弧线'], ['circle', '圆'], ['rect', '矩形']].map(([icon, label]) => (
            <ToolButton key={icon} aria-label={label}><Icon name={icon} /></ToolButton>
          ))}
        </Column>
      </Group>
      <Group width={551} pad={9} cols="83px 130px 153px auto">
        <MenuAnchor>
          <BigButton $width={76} $fill="#b1caec">
            <svg width="44" height="46" viewBox="0 0 44 46">
              <path d="M2 11h42M2 22h42M2 33h42M13 2v42M23 2v42M33 2v30" stroke="#6aa5ea" strokeWidth="2" />
              <path d="M1 9h4v4H1zM1 20h4v4H1zM1 31h4v4H1zM11 41h4v4h-4zM21 41h4v4h-4z" fill="#fff" stroke={B} />
              <path d="M20 27l4-3 14 18-4 4z" fill="#f2a257" stroke="#c86e21" />
              <path d="M15 17v8M11 21h8M12 18l6 6M18 18l-6 6M29 23v4M27 25h4M14 30v6M11 33h6" stroke={O} strokeWidth="2" />
            </svg>
            智能布置
            <Caret />
          </BigButton>
          <Menu>
            <li><button><Icon name="window" size={20} />墙梁轴线</button></li>
            <li><button><Icon name="window" size={20} />外墙梁外边线、内墙梁轴线</button></li>
          </Menu>
        </MenuAnchor>
        <Tools items={[['slope', '三点变斜', true], ['arch', '设置拱板', true], ['level', '查改标高']]} />
        <Tools items={[['lift', '设置升降板'], ['unlift', '取消升降板'], ['inspect', '查看板内钢筋']]} />
        <Tools items={[['toEdge', '板延伸至墙梁边']]} />
      </Group>
    </Ribbon>
  )
}

function ComponentTree() {
  const [current, setCurrent] = useState('现浇板(B)')

  return (
    <Side>
      <SideTop>
        <Icon name="plus2" size={20} />
        <ViewButton aria-label="列表视图"><Icon name="listView" size={22} /></ViewButton>
        <ViewButton aria-label="面板视图"><Icon name="formView" size={24} /></ViewButton>
      </SideTop>
      <SideBody>
        <Tree>
          {tree.map(({ name, items }) => (
            <li key={name}>
              <TreeFolder>
                <Icon name={items ? 'folderOpen' : 'folder'} />
                {name}
              </TreeFolder>
              {items && (
                <ul>
                  {items.map(([icon, label]) => (
                    <LeafRow key={label}>
                      <TreeLeaf $active={label === current} onClick={() => setCurrent(label)}>
                        <Icon name={icon} />
                        {label}
                      </TreeLeaf>
                    </LeafRow>
                  ))}
                </ul>
              )}
            </li>
          ))}
        </Tree>
        <Thumb />
      </SideBody>
    </Side>
  )
}

function PartDock() {
  return (
    <Dock $grow="495 1 0">
      <DockBar><button aria-label="关闭"><Close size={13} /></button></DockBar>
      <DockTabs>
        <DockTab $active>构件列表</DockTab>
        <DockTab>图纸管理</DockTab>
      </DockTabs>
      <DockTools>
        <button><Icon name="newDoc" size={22} />新建<Caret /></button>
        <button><Icon name="delDoc" size={22} />删除</button>
        <button><Icon name="copyDoc" size={22} />复制</button>
        <button><Icon name="layerCopy" size={22} />层间复制</button>
        <button aria-label="更多">
          <svg width="12" height="10" viewBox="0 0 12 10"><path d="M0 0l5 5-5 5zM6 0l5 5-5 5z" fill="#444" /></svg>
        </button>
      </DockTools>
      <PartSearch>
        <input placeholder="搜索构件..." aria-label="搜索构件" />
        <Icon name="lens" size={18} />
      </PartSearch>
      <PartTree>
        <button>
          <svg width="11" height="11" viewBox="0 0 11 11"><path d="M10 0v10H0z" fill="#333" /></svg>
          现浇板
        </button>
        <Part>B-1</Part>
      </PartTree>
    </Dock>
  )
}

function PropDock() {
  return (
    <Dock $grow="577 1 0">
      <DockBar><button aria-label="关闭"><Close size={13} /></button></DockBar>
      <DockTabs>
        <DockTab $active>属性列表</DockTab>
        <DockTab>图层管理</DockTab>
      </DockTabs>
      <PropTable>
        <colgroup>
          <col width="33" />
          <col width="150" />
          <col width="208" />
          <col />
        </colgroup>
        <thead>
          <tr>
            <th aria-label="序号" />
            <th>属性名称</th>
            <th>属性值</th>
            <th>附加</th>
          </tr>
        </thead>
        <tbody>
          {props.map(({ no, name, value, link, check, group }) => (
            <tr key={no}>
              <td>{no}</td>
              <NameCell $link={link}>
                {group ? <span><Expand aria-label={`展开${name}`}>+</Expand>{name}</span> : name}
              </NameCell>
              <ValueCell $blank={group}>{value}</ValueCell>
              <CheckCell>{check && <input type="checkbox" aria-label={`附加 ${name}`} />}</CheckCell>
            </tr>
          ))}
        </tbody>
      </PropTable>
      <TableRest />
      <HScroll>
        <svg width="7" height="12" viewBox="0 0 7 12"><path d="M7 0v12L0 6z" fill="#222" /></svg>
        <div />
        <svg width="7" height="12" viewBox="0 0 7 12"><path d="M0 0v12l7-6z" fill="#222" /></svg>
      </HScroll>
    </Dock>
  )
}

function StatusLine() {
  return (
    <StatusBar>
      <Status $width={300}>X = 34160 Y = 77109</Status>
      <Status $width={119}>层高：  1</Status>
      <Status $width={195}>标高: -3.2~-2.2</Status>
      <Status $width={149}>0</Status>
      <Status $width={115}>隐藏：  0</Status>
      <StatusButton aria-label="正交"><Icon name="ortho" size={22} /></StatusButton>
      <StatusButton $active aria-label="对象捕捉"><Icon name="snapRect" size={22} /><Caret /></StatusButton>
      <StatusButton aria-label="交点"><Icon name="cross" size={22} /></StatusButton>
      <StatusButton aria-label="极轴"><Icon name="angle" size={22} /><Caret /></StatusButton>
      <StatusButton aria-label="动态输入"><Icon name="coord" size={22} /><Caret /></StatusButton>
      <StatusButton $wide>跨图层选择</StatusButton>
      <StatusButton $wide>折线选择</StatusButton>
      <span>指定第一点</span>
      <Fps>200 FPS</Fps>
    </StatusBar>
  )
}

function SystemBar() {
  return (
    <Taskbar>
      <StartButton aria-label="开始">
        <svg width="24" height="24" viewBox="0 0 24 24">
          <path d="M0 4l10-2v9H0zM11 2l13-2v11H11zM0 12h10v10L0 20zM11 12h13v12l-13-2z" fill="#fff" />
        </svg>
      </StartButton>
      <TaskSearch>
        <svg width="32" height="32" viewBox="0 0 32 32"><circle cx="16" cy="16" r="13" fill="#fff" stroke="#000" strokeWidth="4" /></svg>
        <input placeholder="在这里输入你要搜索的内容" aria-label="搜索" />
        <svg width="20" height="26" viewBox="0 0 20 26">
          <path d="M6 4c0-4 8-4 8 0v11c0 4-8 4-8 0zM3 13v3c0 6 14 6 14 0v-3M10 20v5M6 25h8" fill="none" stroke="#222" strokeWidth="2" />
        </svg>
      </TaskSearch>
      <TaskButton aria-label="任务视图">
        <svg width="26" height="26" viewBox="0 0 26 26">
          <path d="M1 1v4h15V1M1 25v-4h15v4M3 8h12v10H3zM22 1v7M22 14v11" fill="none" stroke="#fff" />
          <path d="M20 9h4v4h-4z" fill="#fff" />
        </svg>
      </TaskButton>
      <TaskButton $open aria-label="Edge">
        <svg width="32" height="32" viewBox="0 0 32 32">
          <path d="M1 15C3-4 31-5 31 15v4H11c1 8 12 8 18 4v6C15 37 0 29 6 16c2-3 4-5 8-6-3 2-4 4-4 5h11c0-12-15-9-20 0z" fill="#0d7fdd" />
        </svg>
      </TaskButton>
      <TaskButton aria-label="应用商店">
        <svg width="36" height="34" viewBox="0 0 36 34">
          <path d="M12 10V5c0-5 11-5 11 0v5" fill="none" stroke="#fff" strokeWidth="2" />
          <path d="M0 9h36l-2 25H2z" fill="#fff" />
          <path d="M11 14h7v7h-7z" fill="#f25022" />
          <path d="M19 14h7v7h-7z" fill="#7fba00" />
          <path d="M11 22h7v7h-7z" fill="#00a4ef" />
          <path d="M19 22h7v7h-7z" fill="#ffb900" />
        </svg>
      </TaskButton>
      <TaskButton aria-label="文件资源管理器">
        <svg width="32" height="28" viewBox="0 0 32 28">
          <path d="M0 1h13l2 3h17v22H0z" fill="#ffe294" />
          <path d="M0 1h13l2 3H0z" fill="#f5c02c" />
          <path d="M6 28V15h20v13h-6v-7h-8v7z" fill="#34aee8" />
        </svg>
      </TaskButton>
      <TaskButton aria-label="邮件">
        <svg width="36" height="30" viewBox="0 0 36 30">
          <path d="M0 11L18 0l18 11v19H0z" fill="#fff" />
          <path d="M2 13h32l-10 5 3 7-9-8z" fill="#060c15" />
        </svg>
      </TaskButton>
      <TaskButton $open $front aria-label="GTJ2018"><Hammer size={36} /></TaskButton>
      <Tray>
        <button aria-label="人脉">
          <svg width="24" height="26" viewBox="0 0 24 26" fill="none" stroke="#fff" strokeWidth="2">
            <circle cx="16" cy="5" r="4" />
            <circle cx="7" cy="13" r="4" />
            <path d="M1 24c0-9 12-9 12 0M13 12c3-4 8-2 9 4" />
          </svg>
        </button>
        <button aria-label="隐藏的图标">
          <svg width="18" height="12" viewBox="0 0 18 12"><path d="M1 10l8-8 8 8" fill="none" stroke="#fff" strokeWidth="2" /></svg>
        </button>
        <button aria-label="电池">
          <svg width="24" height="14" viewBox="0 0 24 14">
            <path d="M1 1h20v12H1z" fill="none" stroke="#fff" />
            <path d="M3 3h16v8H3zM21 4h3v6h-3z" fill="#fff" />
          </svg>
        </button>
        <button aria-label="网络">
          <svg width="20" height="20" viewBox="0 0 20 20" fill="none" stroke="#ccc">
            <path d="M1 19C1 9 9 1 19 1M6 19C6 11 11 6 19 6M11 19c0-5 3-8 8-8" strokeWidth="2" />
            <circle cx="17" cy="17" r="2" fill="#fff" />
          </svg>
        </button>
        <button aria-label="静音">
          <svg width="22" height="18" viewBox="0 0 22 18"><path d="M1 6h3l5-5v16l-5-5H1zM13 6l7 7M20 6l-7 7" fill="none" stroke="#fff" /></svg>
        </button>
        <button aria-label="手写">
          <svg width="22" height="22" viewBox="0 0 22 22"><path d="M8 9c-9 1-9 11-3 11 5 0 6-7 8-17 1-3 4-2 3 1l-6 14M10 12l9-5 2 2-9 6" fill="none" stroke="#fff" /></svg>
        </button>
        <button aria-label="输入法">
          <svg width="20" height="22" viewBox="0 0 20 22"><path d="M1 21L10 2l9 19M4 15h12" fill="none" stroke="#fff" strokeWidth="3" /></svg>
        </button>
        <button aria-label="搜狗输入法">
          <svg width="24" height="24" viewBox="0 0 24 24">
            <path d="M1 4l19-4 4 19-20 5z" fill="#f0502a" />
            <path d="M17 7c-4-3-10-1-9 2 1 4 9 2 9 6 0 3-6 4-10 1" fill="none" stroke="#fff" strokeWidth="3" />
          </svg>
        </button>
        <Clock>22:00<br />2018/5/30</Clock>
        <ActionCenter aria-label="操作中心">
          <svg width="24" height="24" viewBox="0 0 24 24"><path d="M1 1h22v18h-8l-4 4v-4H1z" fill="none" stroke="#fff" strokeWidth="2" /></svg>
        </ActionCenter>
        <ShowDesktop aria-label="显示桌面" />
      </Tray>
    </Taskbar>
  )
}

function App() {
  const [tab, setTab] = useState('建模')

  return (
    <Screen>
      <GlobalStyle />
      <TopBar tab={tab} onTab={setTab} />
      <RibbonBar />
      <OptionBar>
        {options.map(([label, value, width]) => (
          <SelectBox key={label} $width={width}>
            <select aria-label={label}>
              <option>{value}</option>
            </select>
            <Caret />
          </SelectBox>
        ))}
        <Offsets>
          <NumberField label="X=" unit="mm" />
          <NumberField label="Y=" />
        </Offsets>
      </OptionBar>
      <Work>
        <ComponentTree />
        <Docks>
          <PartDock />
          <PropDock />
        </Docks>
        <Collapser>
          <button aria-label="收起面板">
            <svg width="5" height="8" viewBox="0 0 5 8"><path d="M5 0v8L0 4z" fill="#ccd" /></svg>
          </button>
        </Collapser>
        <Canvas>
          <Plan />
          <ViewTools />
        </Canvas>
      </Work>
      <StatusLine />
      <SystemBar />
    </Screen>
  )
}

export default App
